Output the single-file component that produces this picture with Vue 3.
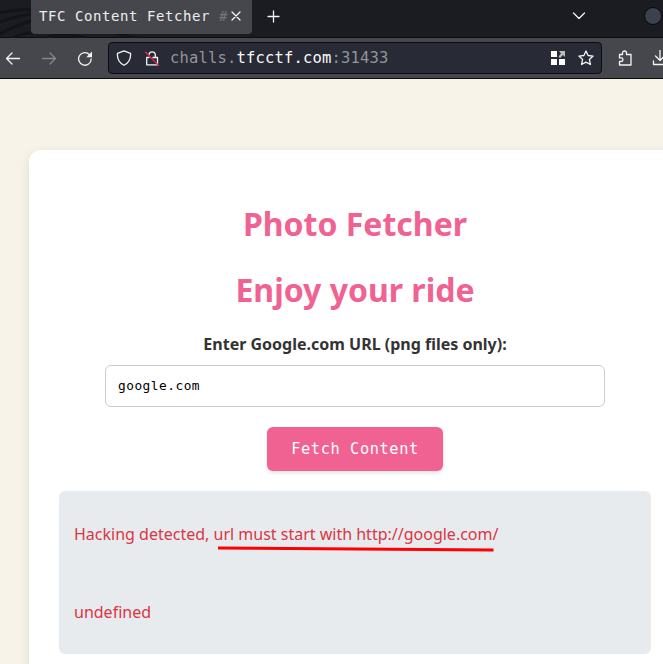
<script setup>
import { ref } from 'vue'

const url = ref('google.com')
</script>

<template>
  <div class="window">
    <header class="tabs">
      <svg class="pattern" width="300" height="38" viewBox="0 0 300 38" fill="none">
        <path d="M0 13Q14 9 32 10M0 22Q16 16 32 14M0 34Q14 26 34 20M12 38Q24 32 40 33M48 37Q64 32 86 38M118 34L136 38" />
      </svg>
      <div class="tab">
        <span class="title">TFC Content Fetcher <i>#</i></span>
        <svg class="close" width="10" height="10" viewBox="0 0 10 10"><path d="M1 1l8 8M9 1L1 9" /></svg>
      </div>
      <svg class="plus" width="13" height="13" viewBox="0 0 13 13"><path d="M6.500 1v11M1 6.500h11" /></svg>
      <svg class="chevron" width="14" height="8" viewBox="0 0 14 8"><path d="M1.500 1l5.500 5.500L12.500 1" /></svg>
      <span class="avatar"></span>
    </header>

    <nav class="toolbar">
      <svg class="back" width="16" height="16" viewBox="0 0 16 16"><path d="M14.500 8.500H1.500M7 3L1.500 8.500L7 14" /></svg>
      <svg class="forward" width="16" height="16" viewBox="0 0 16 16"><path d="M1.500 8.500h13M9 3L14.500 8.500L9 14" /></svg>
      <svg class="reload" width="16" height="16" viewBox="0 0 16 16"><path d="M14.200 9A6.300 6.300 0 1 1 12.600 4.700" /><path d="M15 1.500v5.700H9.300z" class="solid" /></svg>
      <div class="address">
        <svg class="shield" width="16" height="16" viewBox="0 0 16 16"><path d="M8 .8L14.500 3.300C15 8 13.200 12.500 8 15.300C2.800 12.500 1 8 1.500 3.300z" /></svg>
        <svg class="lock" width="16" height="16" viewBox="0 0 16 16"><path d="M5 4.500a3.200 3.200 0 0 1 6.300 0V7M9 7.500h4.500v7.300H2.700V7.500H5" /><path d="M1.500 2l13 13.500" class="slash" /></svg>
        <span class="link">challs.<b>tfcctf.com</b>:31433</span>
        <svg class="apps" width="14" height="14" viewBox="0 0 14 14"><path d="M0 0h6v6H0zM0 8h6v6H0zM8 8h6v6H8z" fill="#fff" /><path d="M8 0h6v6l-2-2-3 3-1.500-1.500L10 2.500z" fill="#bbbcbd" /></svg>
        <svg class="star" width="16" height="16" viewBox="0 0 16 16"><path d="M8 1l2.100 4.500 5 .6-3.700 3.300 1 5.100L8 12.100l-4.400 2.400 1-5.100L.9 6.100l5-.6z" /></svg>
      </div>
      <svg class="puzzle" width="16" height="16" viewBox="0 0 16 16"><path d="M2.500 4.500h3V3a2 2 0 0 1 4 0v1.500h4.500V15H2.500v-3.500h1.700a1.800 1.800 0 0 0 0-3.600H2.500z" /></svg>
      <svg class="download" width="16" height="16" viewBox="0 0 16 16"><path d="M8 0v10.500M3.500 6L8 10.500 12.500 6M1.500 11v3.500h13V11" /></svg>
    </nav>

    <main class="page">
      <section class="card">
        <h1>Photo Fetcher</h1>
        <h1>Enjoy your ride</h1>
        <form @submit.prevent>
          <label for="url">Enter Google.com URL (png files only):</label>
          <input id="url" v-model="url" type="text" />
          <button type="submit">Fetch Content</button>
        </form>
        <div class="result">
          <p class="message">Hacking detected, url must start with http://google.com/
            <svg class="underline" width="280" height="8" viewBox="0 0 280 8"><path d="M1 3L276.500 5" /></svg>
          </p>
          <p>undefined</p>
        </div>
      </section>
    </main>
  </div>
</template>

<style>
body {
  margin: 0;
}
</style>

<style scoped>
* {
  box-sizing: border-box;
}
.window {
  width: 663px;
  height: 664px;
  overflow: hidden;
  display: flex;
  flex-direction: column;
  font-family: "Noto Sans", sans-serif;
}
svg {
  flex: none;
  fill: none;
  stroke: #f4f4f2;
  stroke-width: 1.3;
  stroke-linejoin: round;
  stroke-linecap: round;
}
.tabs {
  position: relative;
  flex: none;
  height: 38px;
  display: flex;
  align-items: flex-start;
  background: #1b1c21;
  border-bottom: 1px solid #0c0d12;
}
.pattern {
  position: absolute;
  left: 0;
  top: 0;
  stroke: #131418;
  stroke-width: 3;
}
.tab {
  position: relative;
  flex: none;
  width: 221px;
  height: 34px;
  margin-left: 31px;
  padding: 0 11px 2px 8px;
  display: flex;
  align-items: center;
  justify-content: space-between;
  background: #45474d;
  border-radius: 0 0 4px 4px;
}
.title {
  font: 14px/20px "DejaVu Sans Mono", monospace;
  letter-spacing: 0.57px;
  color: #ededeb;
  white-space: nowrap;
}
.title i {
  font-style: normal;
  color: #74767a;
}
.plus {
  margin: 10px 0 0 15px;
}
.chevron {
  margin: 12px 0 0 292px;
}
.avatar {
  flex: none;
  width: 18px;
  height: 18px;
  margin: 7px 0 0 58px;
  border: 1px solid #08090c;
  border-radius: 50%;
  background: #3c4150;
}
.toolbar {
  flex: none;
  height: 41px;
  display: flex;
  align-items: center;
  padding-left: 5px;
  background: #45474d;
  border-bottom: 1px solid #0c0d12;
  overflow: hidden;
}
.forward {
  margin-left: 20px;
  stroke: #85878a;
}
.reload {
  margin-left: 20px;
}
.solid {
  fill: #f4f4f2;
  stroke: none;
}
.address {
  flex: none;
  width: 494px;
  height: 32px;
  margin-left: 15px;
  padding: 0 7px;
  display: flex;
  align-items: center;
  background: #282a36;
  border: 1px solid #0c0d12;
  border-radius: 4px;
}
.lock {
  margin-left: 12px;
}
.slash {
  stroke: #e22850;
}
.link {
  flex: 1;
  margin-left: 10px;
  font: 15.500px/22px "DejaVu Sans Mono", monospace;
  letter-spacing: 0.17px;
  color: #949599;
  white-space: nowrap;
}
.link b {
  font-weight: 400;
  color: #fafaf8;
}
.apps {
  margin-right: 13px;
  stroke: none;
}
.puzzle {
  margin-left: 15px;
}
.download {
  margin-left: 19px;
}
.page {
  flex: none;
  width: 710px;
  height: 585px;
  padding: 71px 29px 0;
  background: #f8f3e8;
}
.card {
  height: 560px;
  padding: 41px 30px 0;
  background: #fff;
  border-radius: 12px;
  box-shadow: 0 4px 12px rgba(0, 0, 0, 0.1);
}
h1 {
  margin: 0;
  height: 66px;
  font-size: 32px;
  line-height: 66px;
  text-align: center;
  color: #f06292;
}
form {
  display: flex;
  flex-direction: column;
  align-items: center;
}
label {
  height: 42px;
  font-size: 16px;
  line-height: 42px;
  font-weight: 700;
  color: #333;
}
input {
  width: 500px;
  height: 42px;
  padding: 0 12px 2px;
  font: 12.800px "DejaVu Sans Mono", monospace;
  letter-spacing: 0.5px;
  color: #000;
  background: #fff;
  border: 1px solid #ccc;
  border-radius: 6px;
  outline: none;
}
button {
  width: 176px;
  height: 44px;
  margin: 20px 0;
  padding: 0;
  font: 15.300px "DejaVu Sans Mono", monospace;
  letter-spacing: 0.600px;
  color: #fff;
  background: #f06292;
  border: 0;
  border-radius: 6px;
  box-shadow: 0 2px 4px rgba(0, 0, 0, 0.12);
}
.result {
  height: 163px;
  padding: 30px 15px;
  display: flex;
  flex-direction: column;
  gap: 52px;
  background: #e8ebee;
  border-radius: 6px;
}
p {
  margin: 0;
  font-size: 16px;
  line-height: 26px;
  color: #dc3545;
}
.message {
  position: relative;
}
.underline {
  position: absolute;
  left: 143px;
  top: 24px;
  stroke: #f00;
  stroke-width: 3;
  stroke-linecap: butt;
}
</style>
